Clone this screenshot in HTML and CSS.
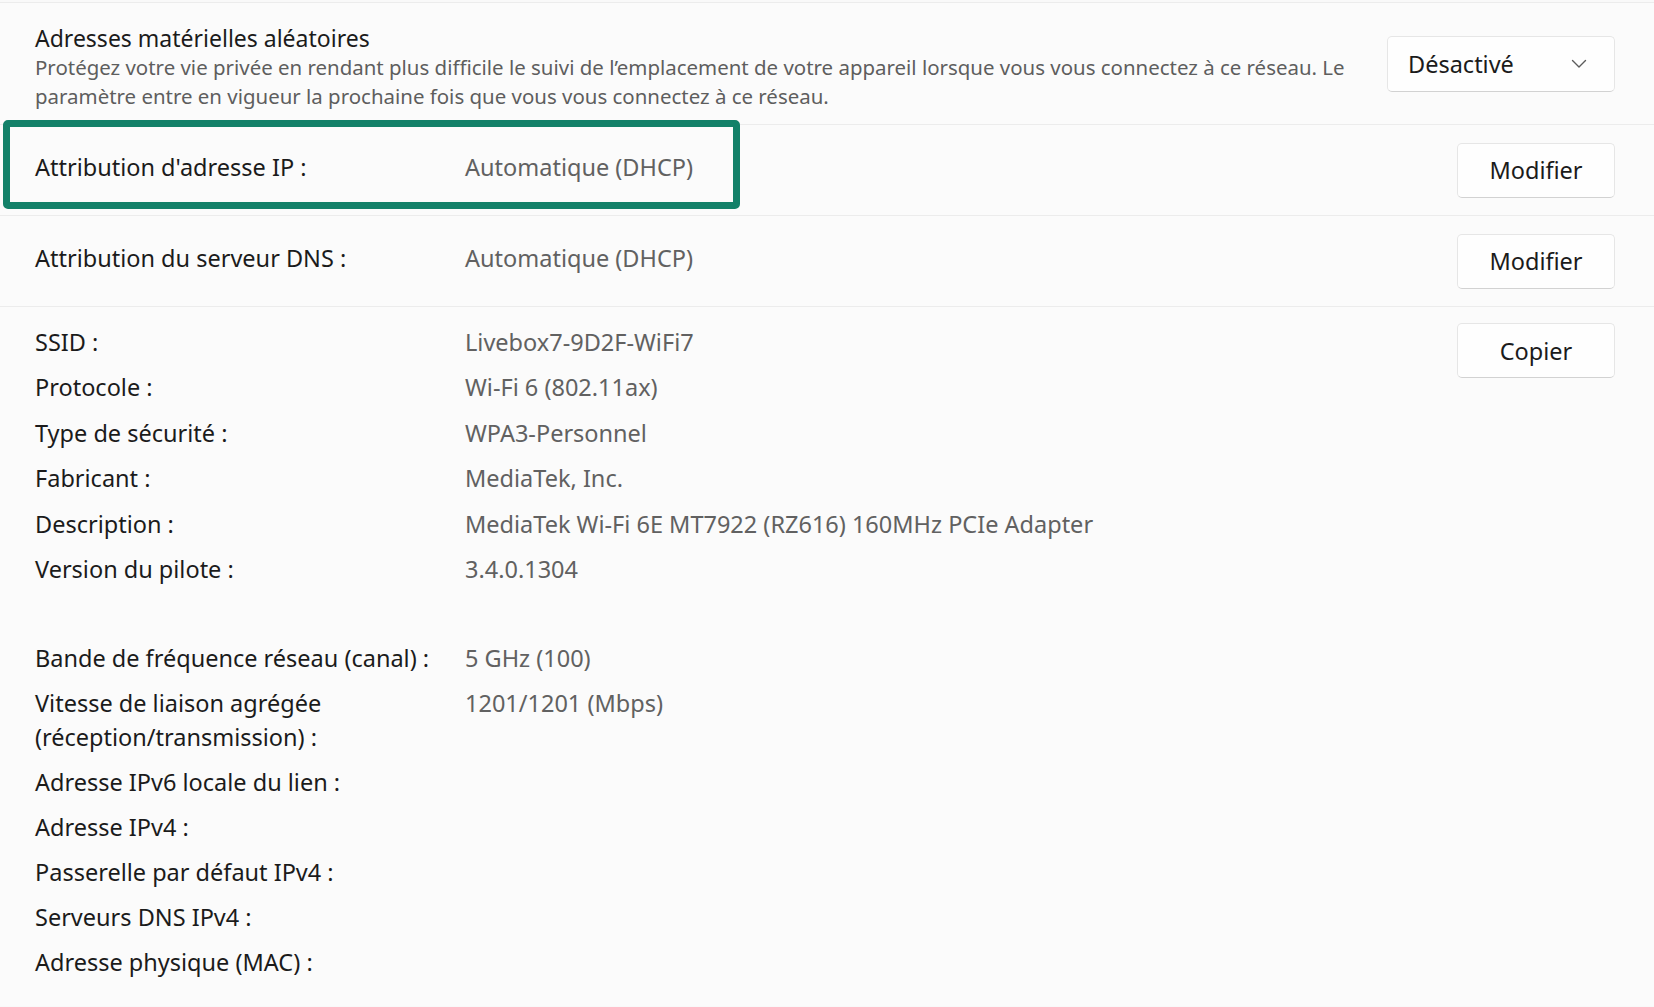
FILE: index.html
```html
<!DOCTYPE html>
<html lang="fr">
<head>
    <meta charset="UTF-8">
    <title>Propriétés Wi-Fi</title>
    <link rel="stylesheet" href="styles.css">
</head>
<body>
<div class="page">

    <section class="card setting">
        <div class="setting-text">
            <h2>Adresses matérielles aléatoires</h2>
            <p>Protégez votre vie privée en rendant plus difficile le suivi de l’emplacement de votre appareil lorsque vous vous connectez à ce réseau. Le paramètre entre en vigueur la prochaine fois que vous vous connectez à ce réseau.</p>
        </div>
        <button class="combo">
            <span>Désactivé</span>
            <svg width="16" height="10" viewBox="0 0 16 10"><path d="M1.5 1.5 L8 8 L14.5 1.5" fill="none" stroke="#5c5c5c" stroke-width="1.4" stroke-linecap="round" stroke-linejoin="round"/></svg>
        </button>
    </section>

    <section class="card row">
        <span class="label">Attribution d'adresse IP :</span>
        <span class="value">Automatique (DHCP)</span>
        <button class="btn">Modifier</button>
        <!-- cadre de mise en évidence par-dessus la ligne -->
        <div class="highlight"></div>
    </section>

    <section class="card row">
        <span class="label">Attribution du serveur DNS :</span>
        <span class="value">Automatique (DHCP)</span>
        <button class="btn">Modifier</button>
    </section>

    <section class="card details">
        <div class="props">
            <dl>
                <dt>SSID :</dt><dd>Livebox7-9D2F-WiFi7</dd>
                <dt>Protocole :</dt><dd>Wi-Fi 6 (802.11ax)</dd>
                <dt>Type de sécurité :</dt><dd>WPA3-Personnel</dd>
                <dt>Fabricant :</dt><dd>MediaTek, Inc.</dd>
                <dt>Description :</dt><dd>MediaTek Wi-Fi 6E MT7922 (RZ616) 160MHz PCIe Adapter</dd>
                <dt>Version du pilote :</dt><dd>3.4.0.1304</dd>
            </dl>
            <dl class="second">
                <dt>Bande de fréquence réseau (canal) :</dt><dd>5 GHz (100)</dd>
                <dt>Vitesse de liaison agrégée (réception/transmission) :</dt><dd>1201/1201 (Mbps)</dd>
                <dt>Adresse IPv6 locale du lien :</dt><dd></dd>
                <dt>Adresse IPv4 :</dt><dd></dd>
                <dt>Passerelle par défaut IPv4 :</dt><dd></dd>
                <dt>Serveurs DNS IPv4 :</dt><dd></dd>
                <dt>Adresse physique (MAC) :</dt><dd></dd>
            </dl>
        </div>
        <button class="btn copy">Copier</button>
    </section>

</div>
</body>
</html>
```

FILE: styles.css
```css
*{
    margin: 0;
    padding: 0;
    box-sizing: border-box;
}

body{
    font-family: "Noto Sans", "Open Sans", sans-serif;
    background: #f9f9f9;
    color: #1b1b1b;
}

.page{
    width: 1654px;
    height: 1007px;
    overflow: hidden;
    padding-top: 2px;
}

.card{
    background: #fbfbfb;
    border-top: 1px solid #ececec;
}

/* carte du haut : titre + description + liste déroulante */
.setting{
    display: flex;
    align-items: flex-start;
    padding: 20px 39px 14px 35px;
}
.setting-text{
    width: 1335px;
}
.setting-text h2{
    font-size: 23px;
    font-weight: normal;
    line-height: 30px;
}
.setting-text p{
    font-size: 20.45px;
    line-height: 28.5px;
    color: #5e5e5e;
}
.combo{
    margin-left: auto;
    margin-top: 13px;
    width: 228px;
    height: 56px;
    display: flex;
    align-items: center;
    justify-content: space-between;
    padding: 0 27px 0 20px;
    font-family: inherit;
    font-size: 23.5px;
    color: #1b1b1b;
    background: #fefefe;
    border: 1px solid #e6e6e6;
    border-bottom-color: #d2d2d2;
    border-radius: 5px;
}

/* lignes simples avec bouton Modifier */
.row{
    position: relative;
    height: 91px;
    display: grid;
    grid-template-columns: 430px 1fr auto;
    align-items: center;
    padding: 0 39px 0 35px;
    font-size: 23.5px;
}
.label,
.value{
    padding-bottom: 6px;
}
.label{
    color: #1b1b1b;
}
.value{
    color: #616161;
}

.btn{
    width: 158px;
    height: 55px;
    font-family: inherit;
    font-size: 23.5px;
    color: #1b1b1b;
    background: #fefefe;
    border: 1px solid #e6e6e6;
    border-bottom-color: #d2d2d2;
    border-radius: 5px;
}

.highlight{
    position: absolute;
    left: 3px;
    top: -5px;
    width: 737px;
    height: 89px;
    border: 7px solid #138169;
    border-radius: 5px;
}

/* bloc des propriétés */
.details{
    display: flex;
    align-items: flex-start;
    justify-content: space-between;
    padding: 18px 39px 0 35px;
    height: 700px;
}
.details > .copy{
    margin-top: -2px;
}
.props dl{
    display: grid;
    grid-template-columns: 430px auto;
    row-gap: 11.4px;
    font-size: 23.5px;
    line-height: 34px;
}
.props dt{
    max-width: 405px;
    color: #1b1b1b;
}
.props dd{
    color: #616161;
}
.props dl.second{
    margin-top: 55px;
    row-gap: 11px;
}
```
